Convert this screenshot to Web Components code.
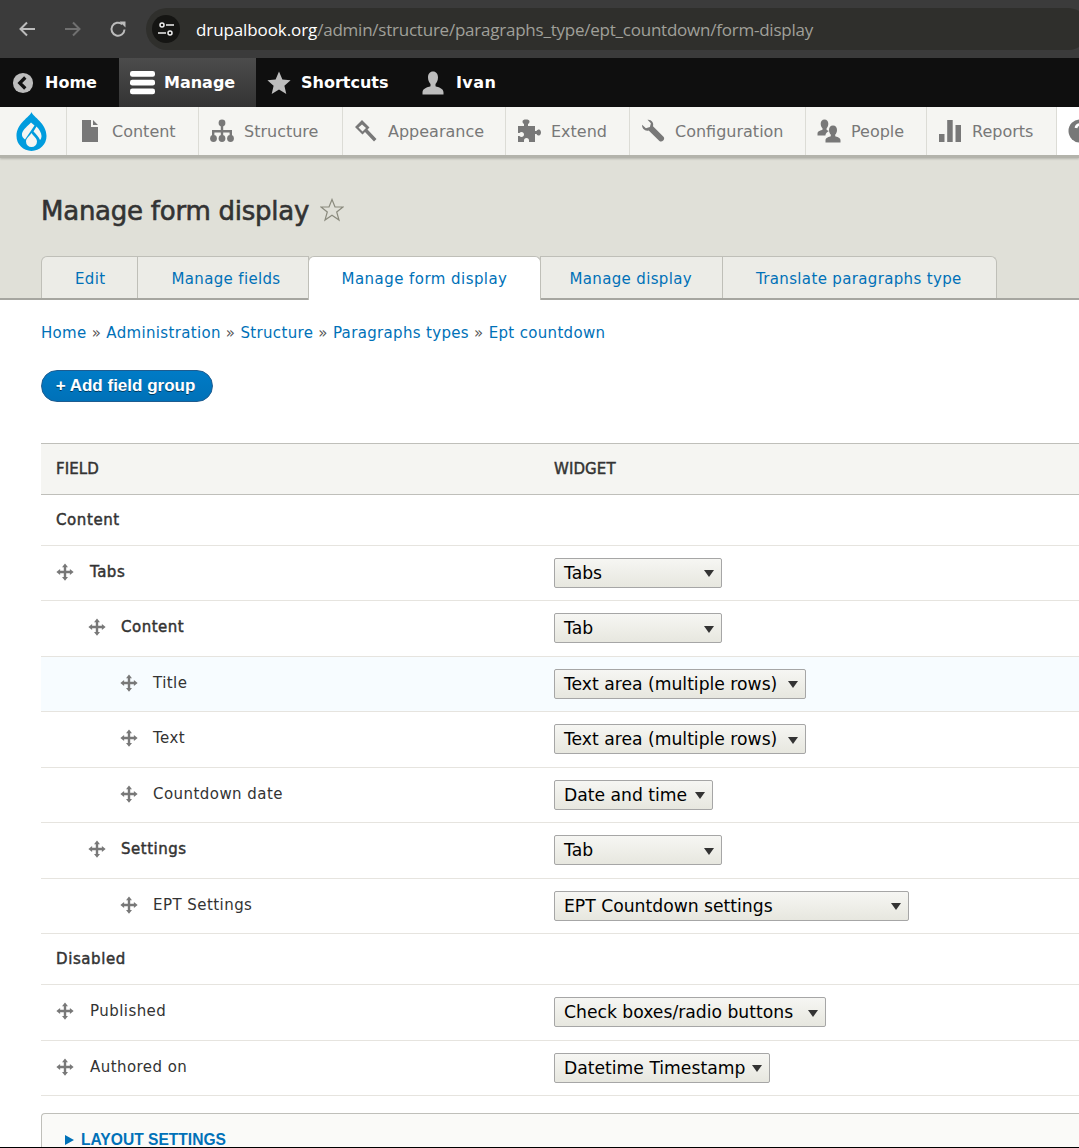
<!DOCTYPE html>
<html>
<head>
<meta charset="utf-8">
<title>Manage form display</title>
<style>
html, body { margin: 0; padding: 0; height: 1148px; overflow: hidden; background: #fff; }
body { font-family: "DejaVu Sans", sans-serif; }
</style>
</head>
<body>
<browser-bar url-host="drupalbook.org" url-path="/admin/structure/paragraphs_type/ept_countdown/form-display"></browser-bar>
<admin-toolbar></admin-toolbar>
<admin-tray></admin-tray>
<page-header title="Manage form display">
  <page-tab style="--pr:32px">Edit</page-tab>
  <page-tab style="--pr:27px">Manage fields</page-tab>
  <page-tab active>Manage form display</page-tab>
  <page-tab style="--pl:28px;--pr:30px">Manage display</page-tab>
  <page-tab style="--pr:34px">Translate paragraphs type</page-tab>
</page-header>
<page-body>
  <bread-crumb items="Home|Administration|Structure|Paragraphs types|Ept countdown"></bread-crumb>
  <action-button>+ Add field group</action-button>
  <field-table>
    <region-row>Content</region-row>
    <field-row level="0" strong widget="Tabs" width="168">Tabs</field-row>
    <field-row level="1" strong widget="Tab" width="168">Content</field-row>
    <field-row level="2" hilite widget="Text area (multiple rows)" width="252">Title</field-row>
    <field-row level="2" widget="Text area (multiple rows)" width="252">Text</field-row>
    <field-row level="2" widget="Date and time" width="159">Countdown date</field-row>
    <field-row level="1" strong widget="Tab" width="168">Settings</field-row>
    <field-row level="2" widget="EPT Countdown settings" width="355">EPT Settings</field-row>
    <region-row>Disabled</region-row>
    <field-row level="0" widget="Check boxes/radio buttons" width="272">Published</field-row>
    <field-row level="0" widget="Datetime Timestamp" width="216">Authored on</field-row>
  </field-table>
  <details-box>LAYOUT SETTINGS</details-box>
  <page-edge></page-edge>
</page-body>
<script>
// shared icon paths, all on a 24x24 box
const ICONS = {
  home: '<circle cx="12" cy="12" r="11" fill="#bdbdbd"/><path d="M14.5 6 8.5 12l6 6" fill="none" stroke="#111" stroke-width="3.6"/>',
  manage: '<rect x="0" y="1" width="24" height="5.4" rx="2.2" fill="#fff"/><rect x="0" y="9.4" width="24" height="5.4" rx="2.2" fill="#fff"/><rect x="0" y="17.8" width="24" height="5.4" rx="2.2" fill="#fff"/>',
  star: '<path d="M12 .5 15.4 8.6 23.6 9.2 17.4 14.7 19.3 23 12 18.6 4.7 23 6.6 14.7.4 9.2 8.6 8.6Z" fill="#bdbdbd"/>',
  user: '<path d="M12 .5c3.2 0 5 2.6 5 5.800 0 3-1.200 5.400-2.500 6.700v2.300c3 1 8 2 8 6.200V23.500H1.500v-2c0-4.200 5-5.200 8-6.200V13c-1.300-1.300-2.500-3.700-2.500-6.700C7 3.100 8.800.5 12 .5Z" fill="#bdbdbd"/>',
  content: '<path d="M4 1h9v7h7v15H4ZM15 1l5 5h-5Z" fill="#787878"/>',
  structure: '<circle cx="12" cy="4" r="3.400" fill="#787878"/><circle cx="3.500" cy="19.500" r="3.400" fill="#787878"/><circle cx="12" cy="19.500" r="3.400" fill="#787878"/><circle cx="20.500" cy="19.500" r="3.400" fill="#787878"/><path d="M10.800 6h2.400v5H22v7h-2.400v-4.600h-6.400V18h-2.400v-4.600H4.400V18H2v-7h8.800Z" fill="#787878"/>',
  appearance: '<path d="M8 1 1 8l7.500 7.500L11 13l9 9.500 2.500-2.500-9-9.500 2-2ZM4.500 8.500 8 5.500l4 3.500-3.500 3.500Z" fill="#787878" fill-rule="evenodd"/>',
  extend: '<path d="M1 7h6V5c-1-.5-1.500-1.500-1.500-2.500C5.500 1 7 .5 9 .5s3.500.5 3.500 2c0 1-.5 2-1.500 2.500v2h7v5h1.500c.5-1 1.500-1.500 2.500-1.500 1.200 0 2 1.500 2 3s-.8 3-2 3c-1 0-2-.5-2.500-1.500H18V23h-6v-1.500c0-1.400-.8-2.500-2.500-2.500S7 20.100 7 21.500V23H1v-6h1.500c.5.5 1.200 1 2 1 1.500 0 2.500-1.200 2.500-2.500S6 13 4.500 13c-.8 0-1.500.5-2 1H1Z" fill="#787878"/>',
  config: '<g transform="matrix(-1 0 0 1 24 0)"><path d="M17.500.8c-3.600-.6-6.700 2.900-5.500 6.500L1.500 17.800c-1.200 1.200-.6 2.900.3 3.800 1 .9 2.600 1.400 3.800.3l10.700-10.500c3.500 1.100 7-1.800 6.600-5.600l-3.800 3.500-4-1.200-1-3.900Z" fill="#787878"/></g>',
  people: '<path d="M7.500.5c2.400 0 3.800 1.900 3.800 4.200 0 2-.9 3.700-1.700 4.600v1.600c.8.300 1.500.6 2.300 1-1.500.8-3.500 2-3.500 4.600H.5v-2c0-2.400 3.600-3.200 5-3.700V9.300C4.600 8.400 3.700 6.700 3.700 4.700 3.700 2.400 5.100.5 7.500.5Z" fill="#787878"/><path d="M16 6.500c2.600 0 4 2 4 4.400 0 2.100-.9 3.800-1.800 4.700v1.700c1.600.6 5.300 1.300 5.300 4V23.500H8.500v-2.200c0-2.700 3.700-3.400 5.300-4v-1.700c-.9-.9-1.800-2.600-1.800-4.700 0-2.400 1.400-4.400 4-4.400Z" fill="#787878"/>',
  reports: '<rect x="1" y="15" width="5.500" height="8" fill="#787878"/><rect x="9.200" y="1" width="5.500" height="22" fill="#787878"/><rect x="17.500" y="6" width="5.500" height="17" fill="#787878"/>',
  help: '<circle cx="12" cy="12" r="11.500" fill="#787878"/><path d="M8 9c.3-2.400 2-3.500 4.200-3.500 2.400 0 4 1.400 4 3.400 0 2.900-3.200 3-3.200 5.600" fill="none" stroke="#fff" stroke-width="2.800"/><rect x="11.300" y="16.300" width="3" height="3" fill="#fff"/>',
  drag: '<path d="M12 .5 16 5.500H13.600V10.400H18.500V8L23.500 12 18.500 16V13.600H13.600V18.500H16L12 23.500 8 18.500H10.400V13.600H5.500V16L.5 12 5.500 8V10.400H10.400V5.500H8Z" fill="#787878"/>'
};

function icon(name, size) {
  return `<svg width="${size}" height="${size}" viewBox="0 0 24 24" aria-hidden="true">${ICONS[name]}</svg>`;
}

class BrowserBar extends HTMLElement {
  constructor() {
    super();
    this.shadow = this.attachShadow({mode: 'open'});
  }
  connectedCallback() {
    this.shadow.innerHTML = `
      <style>
        :host { display: flex; align-items: center; height: 58px; box-sizing: border-box; background: #3b3b3b; padding-left: 18px; font-family: "Open Sans", sans-serif; }
        svg { display: block; flex: none; }
        .nav { display: flex; width: 128px; }
        .nav svg + svg { margin-left: 27px; }
        .nav svg:nth-child(2) { margin-left: 28px; }
        .pill { flex: 1; height: 42px; margin-right: -10px; background: #2f2f2c; border-radius: 21px; display: flex; align-items: center; padding-left: 6px; font-size: 17px; letter-spacing: -.1px; }
        .tune { width: 28px; height: 28px; border-radius: 50%; background: #151513; display: flex; align-items: center; justify-content: center; margin-right: 16px; }
        .host { color: #fff; }
        .path { color: #a0a09a; letter-spacing: -.23px; }
      </style>
      <div class="nav">
        <svg width="18" height="18" viewBox="0 0 18 18"><path d="M17 9H3M9 2.500 2.500 9 9 15.500" fill="none" stroke="#bcbcbc" stroke-width="2"/></svg>
        <svg width="18" height="18" viewBox="0 0 18 18"><path d="M1 9H15M9 2.500 15.500 9 9 15.500" fill="none" stroke="#707070" stroke-width="2"/></svg>
        <svg width="18" height="18" viewBox="0 0 18 18"><path d="M15.500 9.500A6.500 6.500 0 1 1 13.200 4.200" fill="none" stroke="#bcbcbc" stroke-width="2"/><path d="M10.500 1.500h6v6Z" fill="#bcbcbc"/></svg>
      </div>
      <div class="pill">
        <span class="tune"><svg width="16" height="14" viewBox="0 0 16 14"><circle cx="4" cy="3" r="2" fill="none" stroke="#eee" stroke-width="1.500"/><path d="M8 3h8M0 11h8" stroke="#eee" stroke-width="1.500"/><circle cx="12" cy="11" r="2" fill="none" stroke="#eee" stroke-width="1.500"/></svg></span>
        <span class="host">${this.getAttribute('url-host')}</span><span class="path">${this.getAttribute('url-path')}</span>
      </div>`;
  }
}
window.customElements.define('browser-bar', BrowserBar);

class AdminToolbar extends HTMLElement {
  constructor() {
    super();
    this.shadow = this.attachShadow({mode: 'open'});
  }
  connectedCallback() {
    const item = (name, label, cls, size) => `<a class="${cls}">${icon(name, size)}<span>${label}</span></a>`;
    this.shadow.innerHTML = `
      <style>
        :host { display: flex; height: 49px; background: #0f0f0f; font: bold 16px "DejaVu Sans", sans-serif; color: #fff; }
        a { display: flex; align-items: center; }
        svg { display: block; flex: none; }
        .home { width: 119px; padding-left: 12px; gap: 11px; box-sizing: border-box; }
        .manage { width: 137px; padding-left: 11px; gap: 9px; box-sizing: border-box; background: linear-gradient(#4c4c4c, #333); }
        .star { width: 156px; padding-left: 11px; gap: 10px; box-sizing: border-box; }
        .user { padding-left: 9px; gap: 11px; letter-spacing: .4px; }
      </style>
      ${item('home', 'Home', 'home', 22)}
      ${item('manage', 'Manage', 'manage', 25)}
      ${item('star', 'Shortcuts', 'star', 24)}
      ${item('user', 'Ivan', 'user', 24)}`;
  }
}
window.customElements.define('admin-toolbar', AdminToolbar);

class AdminTray extends HTMLElement {
  constructor() {
    super();
    this.shadow = this.attachShadow({mode: 'open'});
  }
  connectedCallback() {
    const links = [
      ['content', 'Content', 132],
      ['structure', 'Structure', 144],
      ['appearance', 'Appearance', 163],
      ['extend', 'Extend', 124],
      ['config', 'Configuration', 176],
      ['people', 'People', 121],
      ['reports', 'Reports', 130]
    ];
    this.shadow.innerHTML = `
      <style>
        :host { display: flex; height: 51px; box-sizing: border-box; background: #f5f5f2; border-bottom: 3px solid #b3b3ab; box-shadow: 0 1px 2px rgba(0,0,0,.2); font: 16px "DejaVu Sans", sans-serif; color: #787878; position: relative; overflow: hidden; }
        .logo { width: 66px; flex: none; box-sizing: border-box; padding: 1px 4px 0 0; display: flex; align-items: center; justify-content: center; }
        a { flex: none; box-sizing: border-box; display: flex; align-items: center; gap: 10px; padding-left: 11px; border-left: 1px solid #dcdcd6; }
        a.help { flex: 1; background: #fff; }
        svg { display: block; flex: none; }
      </style>
      <div class="logo"><svg width="31" height="39" viewBox="0 0 31 39"><path d="M15.500 0C14 5 .5 11 .5 24a15 15 0 0 0 30 0C30.500 11 17 5 15.500 0Z" fill="#009cde"/><path d="M15 10.500 18.500 13.500 9 27.500C7 26 5.500 24 6 21.500 7 17 12 14 15 10.500Z" fill="#f5f5f2"/><path d="M20.500 14.500C23 17 25.500 20.500 25.500 24c0 1.500-.5 3-1.500 4-1-3-4.500-6.500-6.500-8.500Z" fill="#f5f5f2"/><path d="M15.500 21C17 24 21 26 21 29.500a5.500 5.500 0 0 1-11 0C10 26 14 24 15.500 21Z" fill="#f5f5f2"/></svg></div>
      ${links.map(l => `<a style="width:${l[2]}px">${icon(l[0], 24)}<span>${l[1]}</span></a>`).join('')}
      <a class="help">${icon('help', 24)}</a>`;
  }
}
window.customElements.define('admin-tray', AdminTray);

class PageHeader extends HTMLElement {
  constructor() {
    super();
    this.shadow = this.attachShadow({mode: 'open'});
  }
  connectedCallback() {
    this.shadow.innerHTML = `
      <style>
        :host { display: block; height: 142px; box-sizing: border-box; background: #e0e0d8; padding: 37px 0 0 41px; border-bottom: 2px solid #a6a6a0; }
        .title { display: flex; align-items: center; gap: 11px; height: 32px; margin-bottom: 29px; }
        h1 { margin: 0; font: normal 26px "DejaVu Sans", sans-serif; -webkit-text-stroke: .6px #333; color: #333; letter-spacing: -.24px; }
        svg { display: block; margin-top: -2px; }
        .tabs { display: flex; height: 42px; }
      </style>
      <div class="title">
        <h1>${this.getAttribute('title')}</h1>
        <svg width="24" height="24" viewBox="0 0 24 24"><path d="M12 1.500 15 9h8l-6.300 5 2.300 8-7-4.700L5 22l2.300-8L1 9h8Z" fill="none" stroke="#8a8a7d" stroke-width="1.200"/></svg>
      </div>
      <div class="tabs"><slot></slot></div>`;
  }
}
window.customElements.define('page-header', PageHeader);

class PageTab extends HTMLElement {
  constructor() {
    super();
    this.shadow = this.attachShadow({mode: 'open'});
    this.shadow.innerHTML = `
      <style>
        :host { display: flex; align-items: center; box-sizing: border-box; height: 42px; padding: 2px var(--pr, 33px) 0 var(--pl, 33px); margin-left: -1px; background: #ecece7; border: 1px solid #bfbfb8; border-bottom: 0; color: #0071b8; font: 15px "DejaVu Sans", sans-serif; letter-spacing: .35px; white-space: nowrap; }
        :host(:first-child) { margin-left: 0; border-top-left-radius: 6px; }
        :host(:last-child) { border-top-right-radius: 6px; }
        :host([active]) { background: #fff; height: 44px; padding-top: 0; letter-spacing: .45px; border-radius: 6px 6px 0 0; position: relative; z-index: 1; }
      </style>
      <slot></slot>`;
  }
}
window.customElements.define('page-tab', PageTab);

class PageBody extends HTMLElement {
  constructor() {
    super();
    this.shadow = this.attachShadow({mode: 'open'});
    this.shadow.innerHTML = `
      <style>
        :host { display: block; padding-left: 41px; font: 15px "DejaVu Sans", sans-serif; color: #333; }
      </style>
      <slot></slot>`;
  }
}
window.customElements.define('page-body', PageBody);

class BreadCrumb extends HTMLElement {
  constructor() {
    super();
    this.shadow = this.attachShadow({mode: 'open'});
  }
  connectedCallback() {
    const parts = this.getAttribute('items').split('|');
    this.shadow.innerHTML = `
      <style>
        :host { display: block; padding-top: 23px; height: 46px; box-sizing: border-box; line-height: 20px; font-size: 15px; white-space: nowrap; color: #555; letter-spacing: .33px; }
        a { color: #0071b8; }
      </style>
      ${parts.map(p => `<a>${p}</a>`).join(' » ')}`;
  }
}
window.customElements.define('bread-crumb', BreadCrumb);

class ActionButton extends HTMLElement {
  constructor() {
    super();
    this.shadow = this.attachShadow({mode: 'open'});
    this.shadow.innerHTML = `
      <style>
        :host { display: flex; align-items: center; justify-content: center; box-sizing: border-box; width: 172px; height: 32px; margin-top: 24px; padding-right: 3px; border-radius: 16px; background: linear-gradient(#007bc6, #0071b8); border: 1px solid #1e5c90; color: #fff; font: bold 17px "Liberation Sans", sans-serif; text-shadow: 0 1px hsla(0,0%,0%,.5); }
      </style>
      <slot></slot>`;
  }
}
window.customElements.define('action-button', ActionButton);

class FieldTable extends HTMLElement {
  constructor() {
    super();
    this.shadow = this.attachShadow({mode: 'open'});
    this.shadow.innerHTML = `
      <style>
        :host { display: block; margin-top: 41px; }
        .head { display: grid; grid-template-columns: 498px 1fr; height: 51.600px; box-sizing: border-box; align-items: center; padding-left: 15px; background: #f5f5f2; border-top: 1px solid #bfbfba; border-bottom: 1px solid #bfbfba; color: #333; }
        .head span { font: 15px "DejaVu Sans", sans-serif; -webkit-text-stroke: .45px #333; letter-spacing: .1px; }
      </style>
      <div class="head"><span>FIELD</span><span>WIDGET</span></div>
      <slot></slot>`;
  }
}
window.customElements.define('field-table', FieldTable);

class RegionRow extends HTMLElement {
  constructor() {
    super();
    this.shadow = this.attachShadow({mode: 'open'});
    this.shadow.innerHTML = `
      <style>
        :host { display: flex; align-items: center; height: 51px; box-sizing: border-box; padding-left: 15px; border-bottom: 1px solid #e6e4df; font: 15px "DejaVu Sans", sans-serif; -webkit-text-stroke: .45px #333; letter-spacing: .6px; color: #333; }
      </style>
      <slot></slot>`;
  }
}
window.customElements.define('region-row', RegionRow);

class FieldRow extends HTMLElement {
  constructor() {
    super();
    this.shadow = this.attachShadow({mode: 'open'});
  }
  connectedCallback() {
    const level = parseInt(this.getAttribute('level'), 10) || 0;
    const strong = this.hasAttribute('strong');
    this.shadow.innerHTML = `
      <style>
        :host { display: grid; grid-template-columns: 498px 1fr; height: 55.5px; box-sizing: border-box; align-items: center; border-bottom: 1px solid #e6e4df; }
        :host([hilite]) { background: #f7fcff; }
        .cell { display: flex; align-items: center; padding-left: ${15 + level * 32}px; gap: ${level ? 15 : 16}px; transform: translateY(-1px); }
        svg { display: block; flex: none; }
        .name { letter-spacing: .45px; font-size: 15px; color: #333; }
        .name.strong { -webkit-text-stroke: .45px #333; letter-spacing: .5px; }
      </style>
      <div class="cell">${icon('drag', 18)}<span class="name${strong ? ' strong' : ''}"><slot></slot></span></div>
      <widget-select width="${this.getAttribute('width')}">${this.getAttribute('widget')}</widget-select>`;
  }
}
window.customElements.define('field-row', FieldRow);

class WidgetSelect extends HTMLElement {
  constructor() {
    super();
    this.shadow = this.attachShadow({mode: 'open'});
    this.shadow.innerHTML = `
      <style>
        :host { display: flex; align-items: center; justify-content: space-between; box-sizing: border-box; height: 30px; margin-left: 15px; padding: 0 7px 0 9px; background: linear-gradient(#f6f6f3, #e7e7df); border: 1px solid #a6a6a6; border-radius: 2px; font: 17.200px "DejaVu Sans", sans-serif; color: #000; white-space: nowrap; }
        i { display: block; width: 0; height: 0; margin-top: 2px; border: 5.500px solid transparent; border-bottom: 0; border-top: 7px solid #333; }
      </style>
      <span><slot></slot></span><i></i>`;
  }
  connectedCallback() {
    this.style.width = this.getAttribute('width') + 'px';
  }
}
window.customElements.define('widget-select', WidgetSelect);

class DetailsBox extends HTMLElement {
  constructor() {
    super();
    this.shadow = this.attachShadow({mode: 'open'});
    this.shadow.innerHTML = `
      <style>
        :host { display: block; height: 34px; overflow: hidden; margin-top: 17px; box-sizing: border-box; background: #fafaf8; border: 1px solid #bfbfba; border-right: 0; border-bottom: 0; border-radius: 4px 0 0 0; padding: 17px 0 0 23px; color: #0071b8; font: bold 15.600px "Liberation Sans", sans-serif; }
        i { display: inline-block; width: 0; height: 0; margin-right: 7px; border: 5px solid transparent; border-right: 0; border-left: 9px solid #0071b8; }
      </style>
      <i></i><slot></slot>`;
  }
}
window.customElements.define('details-box', DetailsBox);

class PageEdge extends HTMLElement {
  constructor() {
    super();
    this.shadow = this.attachShadow({mode: 'open'});
    this.shadow.innerHTML = `<style>:host { display: block; height: 1px; margin-left: -41px; background: #000; }</style>`;
  }
}
window.customElements.define('page-edge', PageEdge);
</script>
</body>
</html>
